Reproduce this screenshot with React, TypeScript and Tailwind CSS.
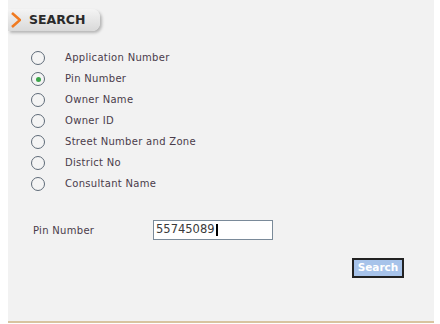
import React from "react";

const options = [
  "Application Number",
  "Pin Number",
  "Owner Name",
  "Owner ID",
  "Street Number and Zone",
  "District No",
  "Consultant Name",
];

function Radio({ checked }: { checked: boolean }) {
  return (
    <span className="flex h-[14px] w-[14px] items-center justify-center rounded-full border-[1.5px] border-[#5f6b78] bg-[#f4f4f4]">
      {checked && <span className="h-[5px] w-[5px] rounded-full bg-[#3ba54a]" />}
    </span>
  );
}

export default function App() {
  return (
    <div className="h-[324px] w-[440px] bg-white" style={{ fontFamily: "'DejaVu Sans', Verdana, sans-serif" }}>
      <div className="ml-[8px] flex h-[323px] w-[426px] flex-col border-b-2 border-[#d8c4a0] bg-[#f2f2f2]">
        <div className="mt-[9px] flex h-[22px] w-[92px] items-center rounded-r-[8px] bg-gradient-to-b from-[#f4f4f4] to-[#d9d9d9] shadow-[2px_2px_3px_rgba(0,0,0,0.25)]">
          <svg width="10" height="16" viewBox="0 0 10 16" className="ml-[3px]">
            <path d="M1 1 L9 8 L1 15" fill="none" stroke="#f07a20" strokeWidth="2.6" />
          </svg>
          <span className="ml-[8px] text-[12.5px] font-bold leading-none text-[#2a2a2a]">SEARCH</span>
        </div>
        <div className="ml-[23px] mt-[20px] flex flex-col gap-[7px]">
          {options.map((o, i) => (
            <div key={o} className="flex h-[14px] items-center">
              <Radio checked={i === 1} />
              <span className="ml-[20px] text-[10px] leading-none tracking-[0.3px] text-[#4a3c4a]">{o}</span>
            </div>
          ))}
        </div>
        <div className="ml-[25px] mt-[29px] flex items-center">
          <span className="w-[120px] text-[10px] tracking-[0.3px] text-[#4a3c4a]">Pin Number</span>
          <div className="flex h-[20px] w-[120px] items-center border border-[#7a8a99] bg-white pl-[2px] text-[11.5px] text-[#3a3a3a]">
            55745089<span className="ml-[1px] h-[12px] w-[2px] bg-black" />
          </div>
        </div>
        <div className="mr-[30px] mt-[18px] flex justify-end">
          <button className="h-[20px] w-[52px] border-2 border-[#222] bg-[#a7c3ea] text-[10.5px] font-bold text-white">Search</button>
        </div>
      </div>
    </div>
  );
}
